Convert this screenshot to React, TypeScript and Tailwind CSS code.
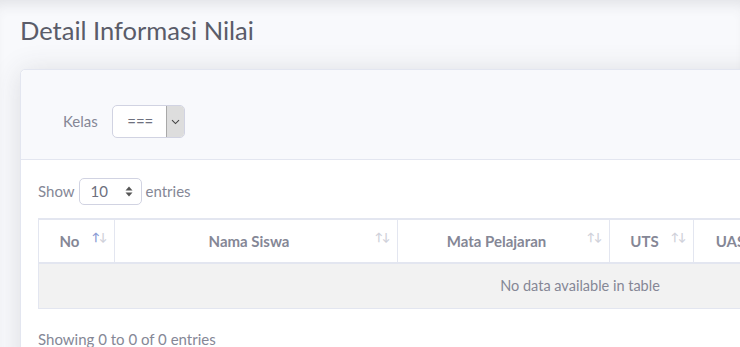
import React from 'react';

const columns = [
  { label: 'No', width: 'w-[75px]', active: true },
  { label: 'Nama Siswa', width: 'w-[283px]' },
  { label: 'Mata Pelajaran', width: 'w-[212px]' },
  { label: 'UTS', width: 'w-[84px]' },
  { label: 'UAS', width: 'w-[88px]' },
  { label: 'Rata-rata', width: 'w-[170px]' },
  { label: 'Aksi', width: 'w-[170px]' },
];

const SortIcon: React.FC<{ active?: boolean }> = ({ active }) => (
  <span className="absolute right-[8px] top-[11px] text-[11px] leading-none tracking-[-1px]">
    <span className={active ? 'text-[#8a9bd4]' : 'text-[#cfd1da]'}>↑</span>
    <span className="text-[#cfd1da]">↓</span>
  </span>
);

const App: React.FC = () => {
  return (
    <div className="min-h-screen w-[740px] h-[347px] overflow-hidden bg-[#f8f9fc] font-['Lato',sans-serif] text-[#858796] shadow-[inset_0_12px_14px_-8px_rgba(58,59,69,0.12)]">
      <div className="px-[20px] pt-[14px]">
        {/* Title */}
        <h1 className="text-[25.5px] leading-[33px] font-normal text-[#5a5c69] mb-[22px]">
          Detail Informasi Nilai
        </h1>

        {/* Card */}
        <div className="w-[1120px] bg-white border border-[#e3e6f0] rounded-[5px] shadow-[0_2px_28px_0_rgba(58,59,69,0.15)]">
          {/* Header */}
          <div className="bg-[#f8f9fc] border-b border-[#e3e6f0] rounded-t-[5px] pl-[42px] pt-[35px] pb-[21px]">
            <div className="flex items-center gap-[14px]">
              <span className="text-[15px]">Kelas</span>
              <div className="flex h-[33px] w-[73px] bg-white border border-[#d1d3e2] rounded-[5px] overflow-hidden">
                <span className="flex-1 flex items-center justify-center text-[15px] text-[#6e707e] pl-[2px]">===</span>
                <span className="w-[18px] flex items-center justify-center bg-[#dddddd] border-l border-[#a9a9a9]">
                  <svg width="9" height="6" viewBox="0 0 9 6" fill="none">
                    <path d="M1 1.2 4.5 4.6 8 1.2" stroke="#444" strokeWidth="1.1" />
                  </svg>
                </span>
              </div>
            </div>
          </div>

          {/* Body */}
          <div className="px-[17px] pt-[18px] pb-[20px]">
            <div className="flex items-center gap-[4px] text-[15px]">
              <span>Show</span>
              <div className="flex items-center justify-between h-[27px] w-[63px] border border-[#d1d3e2] rounded-[5px] pl-[11px] pr-[8px] text-[#6e707e]">
                <span className="text-[15px]">10</span>
                <svg width="8" height="11" viewBox="0 0 8 11">
                  <path d="M4 0.5 7.5 4.5H0.5Z" fill="#555" />
                  <path d="M4 10.5 0.5 6.5H7.5Z" fill="#555" />
                </svg>
              </div>
              <span>entries</span>
            </div>

            {/* Table */}
            <div className="mt-[13px] w-[1084px] border-l border-r border-[#e3e6f0]">
              <div className="flex h-[46px] border-t-2 border-b-2 border-[#e3e6f0]">
                {columns.map((c, i) => (
                  <div
                    key={c.label}
                    className={`relative ${c.width} ${i > 0 ? 'border-l border-[#e3e6f0]' : ''} flex items-center justify-center pr-[14px] text-[15px] font-bold text-[#858796]`}
                  >
                    {c.label}
                    <SortIcon active={c.active} />
                  </div>
                ))}
              </div>
              <div className="h-[45px] bg-[#f2f2f2] border-b border-[#e3e6f0] flex items-center justify-center text-[14.5px]">
                No data available in table
              </div>
            </div>

            <div className="mt-[19px] text-[15px]">Showing 0 to 0 of 0 entries</div>
          </div>
        </div>
      </div>
    </div>
  );
};

export default App;
